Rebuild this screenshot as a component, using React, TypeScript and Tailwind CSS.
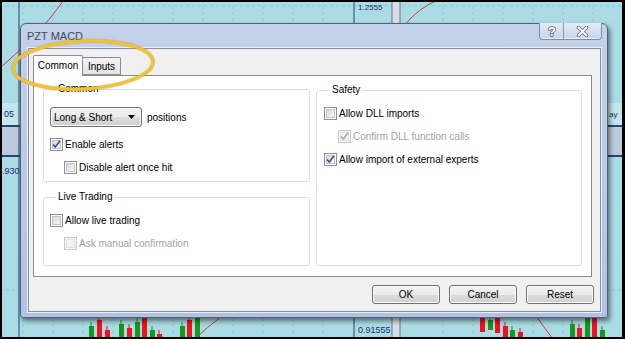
import { ReactNode } from 'react';

const gridX = [23, 53, 83, 113, 143, 173, 203, 233, 263, 293, 323, 443, 473, 503, 533, 563, 593];

const candles = [
  { x: 89, top: 326, bottom: 337, up: true },
  { x: 97, top: 320, bottom: 337, up: false },
  { x: 105, top: 330, bottom: 337, up: false },
  { x: 119, top: 324, bottom: 337, up: true },
  { x: 127, top: 328, bottom: 337, up: false },
  { x: 135, top: 322, bottom: 337, up: true },
  { x: 142, top: 318, bottom: 337, up: false },
  { x: 150, top: 330, bottom: 337, up: true },
  { x: 157, top: 334, bottom: 337, up: false },
  { x: 180, top: 326, bottom: 337, up: true },
  { x: 187, top: 320, bottom: 337, up: false },
  { x: 195, top: 318, bottom: 337, up: true },
  { x: 480, top: 318, bottom: 332, up: false },
  { x: 488, top: 320, bottom: 330, up: true },
  { x: 495, top: 318, bottom: 333, up: false },
  { x: 503, top: 326, bottom: 337, up: false },
  { x: 510, top: 330, bottom: 337, up: true },
  { x: 518, top: 332, bottom: 337, up: false },
  { x: 570, top: 324, bottom: 337, up: true },
  { x: 577, top: 328, bottom: 337, up: false },
  { x: 585, top: 318, bottom: 337, up: true },
  { x: 592, top: 318, bottom: 337, up: false },
  { x: 600, top: 330, bottom: 337, up: true },
];

function ChartBackdrop() {
  return (
    <svg className="absolute inset-0 h-full w-full" viewBox="2 2 620 335" preserveAspectRatio="none">
      <rect x="0" y="0" width="625" height="339" fill="#a9dce4" />
      {gridX.map((x) => (
        <line key={x} x1={x} y1="0" x2={x} y2="339" stroke="#8fc8d2" strokeDasharray="3 3" strokeWidth="1" />
      ))}
      <line x1="0" y1="6" x2="625" y2="6" stroke="#8fc8d2" strokeDasharray="3 3" />
      <line x1="0" y1="290" x2="625" y2="290" stroke="#8fc8d2" strokeDasharray="3 3" />
      {/* band behind dialog */}
      <rect x="0" y="103" width="625" height="22" fill="#c4e6ee" />
      <rect x="0" y="125" width="625" height="2" fill="#2b3f7a" />
      <rect x="0" y="127" width="625" height="28" fill="#bccbdc" />
      <rect x="0" y="155" width="625" height="2" fill="#2b3f7a" />
      <line x1="19" y1="0" x2="19" y2="339" stroke="#2b3f7a" strokeWidth="1" />
      <text x="4" y="117" fontSize="9" fill="#1c2c6a" fontFamily="Liberation Sans, Arial, sans-serif">05</text>
      <text x="2" y="174" fontSize="9" fill="#1c2c6a" fontFamily="Liberation Sans, Arial, sans-serif">.930</text>
      <text x="609" y="117" fontSize="8" fill="#1c2c6a" fontFamily="Liberation Sans, Arial, sans-serif">ay</text>
      <line x1="354" y1="0" x2="354" y2="339" stroke="#2b3f7a" strokeWidth="1" />
      <rect x="392" y="0" width="8" height="339" fill="#d9dde6" stroke="#6d7688" strokeWidth="1" />
      <text x="358" y="10" fontSize="8" fill="#1c2c6a" fontFamily="Liberation Sans, Arial, sans-serif">1.2555</text>
      <text x="358" y="333" fontSize="9" fill="#1c2c6a" fontFamily="Liberation Sans, Arial, sans-serif">0.91555</text>
      <path d="M64 0 Q40 34 0 68" fill="none" stroke="#e0303a" strokeWidth="1" />
      <path d="M404 26 Q418 8 438 0" fill="none" stroke="#e0303a" strokeWidth="1" />
      <path d="M196 338 Q206 328 222 316" fill="none" stroke="#e0303a" strokeWidth="1" />
      <path d="M536 316 L552 338" fill="none" stroke="#e0303a" strokeWidth="1" />
      {candles.map((c) => (
        <g key={c.x}>
          <line x1={c.x + 2} y1={c.top - 4} x2={c.x + 2} y2={c.bottom} stroke={c.up ? '#119a1c' : '#f01020'} />
          <rect x={c.x} y={c.top} width="5" height={c.bottom - c.top} fill={c.up ? '#119a1c' : '#f01020'} />
        </g>
      ))}
    </svg>
  );
}

function CheckRow({
  label,
  checked = false,
  disabled = false,
  indent = false,
}: {
  label: string;
  checked?: boolean;
  disabled?: boolean;
  indent?: boolean;
}) {
  return (
    <div className={`flex h-[23px] items-center gap-[2px] ${indent ? 'pl-[14px]' : ''}`}>
      <span
        className={`relative flex h-[13px] w-[13px] shrink-0 items-center justify-center border ${
          disabled ? 'border-[#c9c9c9] bg-[#f6f6f6]' : 'border-[#8e8f8f] bg-white'
        }`}
      >
        <span
          className={`h-[9px] w-[9px] border ${
            disabled
              ? 'border-[#e2e2e2] bg-[#f2f2f2]'
              : 'border-[#c3c7cd] bg-gradient-to-br from-[#d5d9df] to-[#f8f8f8]'
          }`}
        />
        {checked && (
          <svg className="absolute left-0 top-0" width="11" height="11" viewBox="0 0 11 11">
            <path
              d="M2 5.5 L4.3 8 L9 1.8"
              fill="none"
              stroke={disabled ? '#a9a9a9' : '#3e5190'}
              strokeWidth="1.7"
            />
          </svg>
        )}
      </span>
      <span className={disabled ? 'text-[#a3a3a3]' : 'text-black'}>{label}</span>
    </div>
  );
}

function Group({ title, className, children }: { title: string; className?: string; children: ReactNode }) {
  return (
    <fieldset className={`rounded-[3px] border border-[#d5dfe5] ${className ?? ''}`}>
      <legend className="ml-[6px] px-[2px] leading-[12px] text-black">{title}</legend>
      {children}
    </fieldset>
  );
}

function WinButton({ children }: { children: ReactNode }) {
  return (
    <button className="flex h-[19px] w-[68px] items-center justify-center rounded-[3px] border border-[#707070] bg-[linear-gradient(#f2f2f2_0%,#ebebeb_50%,#dddddd_51%,#cfcfcf_100%)] text-black shadow-[inset_0_0_0_1px_#fbfbfb]">
      {children}
    </button>
  );
}

export default function App() {
  return (
    <div className="relative h-[339px] w-[625px] overflow-hidden border-[2px] border-r-[3px] border-black font-['Liberation_Sans',Arial,sans-serif] text-[10px]">
      <ChartBackdrop />

      {/* dialog window */}
      <div className="absolute left-[18px] top-[21px] flex h-[295px] w-[588px] flex-col rounded-t-[6px] rounded-b-[3px] border border-[#56606e] bg-gradient-to-b from-[#c3d1ea] to-[#b2c2e3] shadow-[2px_3px_5px_rgba(0,0,0,0.5)]">
        <div className="relative flex h-[24px] items-center pl-[6px] text-[11px] text-[#444a55]">
          PZT MACD
          <div className="absolute right-[5px] top-[-1px] flex h-[17px] w-[63px] rounded-b-[4px] border border-t-0 border-[#7d8ba3] bg-gradient-to-b from-[#e4ebf6] to-[#c7d4ea] shadow-[inset_0_-1px_0_#eef3fb]">
            <div className="flex w-[24px] items-center justify-center border-r border-[#8d99b0]">
              <svg width="12" height="14" viewBox="0 0 12 14">
                <text
                  x="6"
                  y="11.5"
                  textAnchor="middle"
                  fontSize="13"
                  fontWeight="bold"
                  fontFamily="Liberation Sans, Arial, sans-serif"
                  fill="#ffffff"
                  stroke="#5a6372"
                  strokeWidth="1.6"
                  paintOrder="stroke"
                >
                  ?
                </text>
              </svg>
            </div>
            <div className="flex flex-1 items-center justify-center">
              <svg width="13" height="11" viewBox="0 0 13 11">
                <path d="M2.5 1.5 L10.5 9.5 M10.5 1.5 L2.5 9.5" stroke="#6a7280" strokeWidth="3.6" strokeLinecap="round" />
                <path d="M2.5 1.5 L10.5 9.5 M10.5 1.5 L2.5 9.5" stroke="#ffffff" strokeWidth="1.8" strokeLinecap="round" />
              </svg>
            </div>
          </div>
        </div>

        <div className="mb-[5px] ml-[7px] mr-[6px] flex flex-1 flex-col border border-[#8590a6] bg-[#f0f0f0] shadow-[0_0_0_1px_#e9eef8]">
          {/* tabs */}
          <div className="flex h-[26px] items-end pl-[4px]">
            <div className="relative z-10 mb-[-1px] flex h-[21px] w-[50px] items-center justify-center rounded-t-[2px] border border-b-0 border-[#898c95] bg-white pb-[1px] text-black">
              Common
            </div>
            <div className="flex h-[18px] w-[38px] items-center justify-center rounded-tr-[2px] border border-l-0 border-[#898c95] bg-gradient-to-b from-[#f3f3f3] to-[#e3e3e3] text-black">
              Inputs
            </div>
          </div>
          <div className="ml-[4px] mr-[8px] grid h-[202px] grid-cols-[267px_266px] gap-[6px] border border-[#898c95] bg-white pb-[10px] pl-[9px] pt-[7px]">
            <div className="flex flex-col">
              <Group title="Common" className="h-[99px] px-[6px] pt-[12px]">
                <div className="flex items-center gap-[5px]">
                  <div className="flex h-[20px] w-[92px] items-center justify-between rounded-[3px] border border-[#707070] bg-[linear-gradient(#f2f2f2_0%,#ebebeb_50%,#dddddd_51%,#cfcfcf_100%)] pl-[3px] pr-[6px] text-black shadow-[inset_0_0_0_1px_#fbfbfb]">
                    <span>Long &amp; Short</span>
                    <svg width="7" height="4" viewBox="0 0 7 4">
                      <path d="M0 0 L7 0 L3.5 4 Z" fill="#000" />
                    </svg>
                  </div>
                  <span>positions</span>
                </div>
                <div className="mt-[6px]">
                  <CheckRow label="Enable alerts" checked />
                  <CheckRow label="Disable alert once hit" indent />
                </div>
              </Group>
              <Group title="Live Trading" className="mt-[9px] flex-1 px-[6px] pt-[6px]">
                <CheckRow label="Allow live trading" />
                <CheckRow label="Ask manual confirmation" disabled indent />
              </Group>
            </div>
            <Group title="Safety" className="mt-[1px] px-[7px] pt-[6px]">
              <CheckRow label="Allow DLL imports" />
              <CheckRow label="Confirm DLL function calls" checked disabled indent />
              <CheckRow label="Allow import of external experts" checked />
            </Group>
          </div>
          <div className="flex justify-end gap-[9px] pr-[6px] pt-[8px]">
            <WinButton>OK</WinButton>
            <WinButton>Cancel</WinButton>
            <WinButton>Reset</WinButton>
          </div>
        </div>
      </div>

      {/* highlight annotation */}
      <svg className="pointer-events-none absolute left-0 top-0" width="170" height="100" viewBox="2 2 170 100">
        <ellipse cx="83" cy="65" rx="70" ry="24" transform="rotate(-3 83 65)" fill="none" stroke="#b98c10" strokeOpacity="0.35" strokeWidth="4.5" />
        <ellipse cx="83" cy="65" rx="70" ry="24" transform="rotate(-3 83 65)" fill="none" stroke="#f3c232" strokeWidth="3" />
      </svg>
    </div>
  );
}
